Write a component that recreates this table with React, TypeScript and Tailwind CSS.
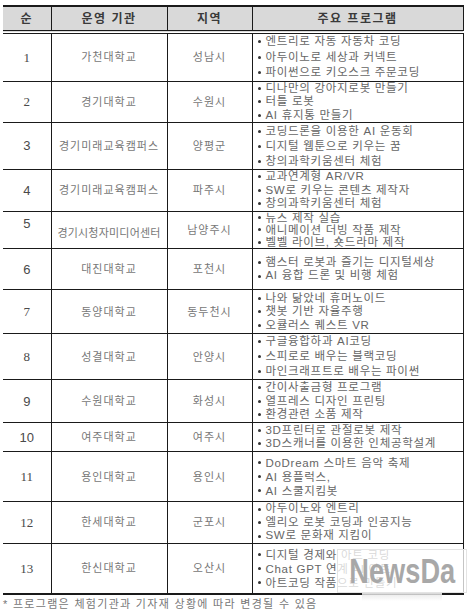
import React from "react";

type Row = {
    no: string;
    serif?: boolean;
    org: string;
    area: string;
    programs: string[];
    h: number;
    lead: number;
};

const ROWS: Row[] = [
    { no: "1", serif: true, org: "가천대학교", area: "성남시", programs: ["엔트리로 자동 자동차 코딩", "아두이노로 세상과 커넥트", "파이썬으로 키오스크 주문코딩"], h: 47, lead: 15.5 },
    { no: "2", serif: true, org: "경기대학교", area: "수원시", programs: ["디나만의 강아지로봇 만들기", "터틀 로봇", "AI 휴지통 만들기"], h: 41, lead: 13.5 },
    { no: "3", org: "경기미래교육캠퍼스", area: "양평군", programs: ["코딩드론을 이용한 AI 운동회", "디지털 웹툰으로 키우는 꿈", "창의과학키움센터 체험"], h: 47, lead: 15 },
    { no: "4", org: "경기미래교육캠퍼스", area: "파주시", programs: ["교과연계형 AR/VR", "SW로 키우는 콘텐츠 제작자", "창의과학키움센터 체험"], h: 41, lead: 13.5 },
    { no: "5", org: "경기시청자미디어센터", area: "남양주시", programs: ["뉴스 제작 실습", "애니메이션 더빙 작품 제작", "벨벨 라이브, 숏드라마 제작"], h: 37, lead: 12.3 },
    { no: "6", org: "대진대학교", area: "포천시", programs: ["햄스터 로봇과 즐기는 디지털세상", "AI 융합 드론 및 비행 체험"], h: 41, lead: 13.5 },
    { no: "7", serif: true, org: "동양대학교", area: "동두천시", programs: ["나와 닮았네 휴머노이드", "챗봇 기반 자율주행", "오큘러스 퀘스트 VR"], h: 44, lead: 13.5 },
    { no: "8", serif: true, org: "성결대학교", area: "안양시", programs: ["구글융합하과 AI코딩", "스피로로 배우는 블랙코딩", "마인크래프트로 배우는 파이썬"], h: 45, lead: 15 },
    { no: "9", org: "수원대학교", area: "화성시", programs: ["간이사출금형 프로그램", "열프레스 디자인 프린팅", "환경관련 소품 제작"], h: 43, lead: 13.5 },
    { no: "10", org: "여주대학교", area: "여주시", programs: ["3D프린터로 관절로봇 제작", "3D스캐너를 이용한 인체공학설계"], h: 29, lead: 13 },
    { no: "11", serif: true, org: "용인대학교", area: "용인시", programs: ["DoDream 스마트 음악 축제", "AI 용플럭스,", "AI 스쿨지킴봇"], h: 50, lead: 14 },
    { no: "12", serif: true, org: "한세대학교", area: "군포시", programs: ["아두이노와 엔트리", "엘리오 로봇 코딩과 인공지능", "SW로 문화재 지킴이"], h: 41, lead: 13.5 },
    { no: "13", serif: true, org: "한신대학교", area: "오산시", programs: ["디지털 경제와 아트 코딩", "Chat GPT 연계 AI 아트", "아트코딩 작품으로 만들기"], h: 51, lead: 14 },
];

const KR = "font-['Liberation_Sans','Noto_Sans_CJK_KR',sans-serif]";

export default function App() {
    return (
        <div className={`relative w-[472px] h-[611px] bg-white overflow-hidden ${KR}`}>
            <div className="pt-[5px] pl-[3px]">
                <table className="w-[460px] table-fixed border-collapse">
                    <colgroup>
                        <col className="w-[48px]" />
                        <col className="w-[116px]" />
                        <col className="w-[85px]" />
                        <col className="w-[211px]" />
                    </colgroup>
                    <thead>
                        <tr className="h-[26px] bg-[#d9d9d9] text-[12px] font-bold text-[#3a3a3a] tracking-[1.5px]">
                            <th className="border-t-2 border-b-4 border-double border-r border-[#1a1a1a] font-bold">순</th>
                            <th className="border-t-2 border-b-4 border-double border-r border-[#1a1a1a] font-bold">운영 기관</th>
                            <th className="border-t-2 border-b-4 border-double border-r border-[#1a1a1a] font-bold">지역</th>
                            <th className="border-t-2 border-b-4 border-double border-r border-[#1a1a1a] font-bold">주요 프로그램</th>
                        </tr>
                    </thead>
                    <tbody>
                        {ROWS.map((r, i) => {
                            const last = i === ROWS.length - 1;
                            const b = last ? "border-b-2" : "border-b";
                            const long = r.org.length > 9;
                            return (
                                <tr key={r.no} style={{ height: r.h }}>
                                    <td
                                        className={`${b} border-r border-[#1a1a1a] text-center text-[13px] text-[#4a4a4a] ${r.serif ? "font-['Liberation_Serif',serif]" : ""} ${r.no === "5" ? "align-top pt-[2px]" : ""}`}
                                    >
                                        {r.no}
                                    </td>
                                    <td className={`${b} border-r border-[#1a1a1a] text-center whitespace-nowrap text-[11px] text-[#777] ${long ? "tracking-[0.2px] pt-[6px]" : "tracking-[1px]"}`}>
                                        {r.org}
                                    </td>
                                    <td className={`${b} border-r border-[#1a1a1a] text-center whitespace-nowrap text-[11px] text-[#777] tracking-[1px]`}>
                                        {r.area}
                                    </td>
                                    <td className={`${b} border-r border-[#1a1a1a] pl-[5px] text-[11.5px] text-[#666] tracking-[0.7px]`}>
                                        {r.programs.map((p) => (
                                            <div key={p} className="flex items-center whitespace-nowrap" style={{ lineHeight: `${r.lead}px` }}>
                                                <span className="w-[3px] h-[3px] rounded-full bg-[#333] mr-[5px] shrink-0" />
                                                {p}
                                            </div>
                                        ))}
                                    </td>
                                </tr>
                            );
                        })}
                    </tbody>
                </table>
                <p className="mt-[2px] text-[11px] text-[#777] tracking-[1.3px] leading-[14px]">
                    * 프로그램은 체험기관과 기자재 상황에 따라 변경될 수 있음
                </p>
            </div>

            {/* watermark */}
            <div className="absolute left-[337px] top-[549px] w-[130px] h-[44px] bg-white/75 border border-[#e4e4e4] flex items-center justify-center">
                <span className="inline-block scale-x-[0.85] scale-y-[1.1] font-['Liberation_Sans',sans-serif] text-[32px] font-bold text-[#a8a8a8] leading-none">
                    NewsDa
                </span>
            </div>
            <div className="absolute left-[362px] top-[593px] w-[80px] h-[8px] bg-gradient-to-b from-[#e8e8e8] to-transparent" />
        </div>
    );
}
